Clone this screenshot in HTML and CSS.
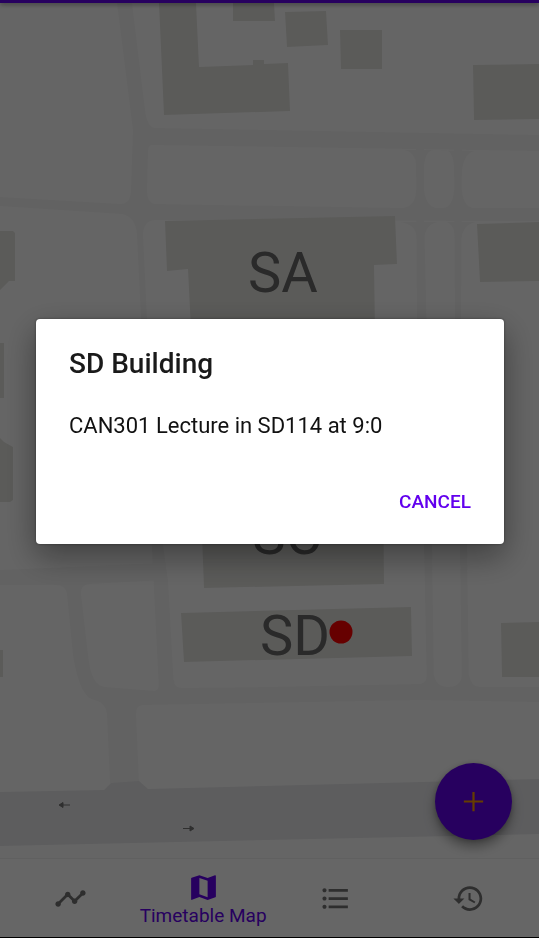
FILE: index.html
```html
<!DOCTYPE html>
<html lang="en">
<head>
<meta charset="utf-8">
<meta name="viewport" content="width=device-width, initial-scale=1">
<title>Timetable Map</title>
<link rel="stylesheet" href="styles.css">
</head>
<body>
<div class="app">
  <header class="app-bar"></header>
  <main class="map">
    <svg class="map-canvas" viewBox="0 3 539 855" preserveAspectRatio="xMidYMid slice" role="img" aria-label="Campus map">
      <g class="road">
        <path d="M117 3H132L145 110Q147 126 154 128L539 135V151L152 145Q148 145 148 152L147 190Q147 203 155 204L400 208L539 208V221L155 220Q143 221 143 235L147 318L163 545L168 580L174 690H159L154 590L141 318L137 235Q136 217 122 214L0 206V197L120 204Q131 204 131 190L133 130Z"/>
        <path d="M416 145H424L424 215L432 545L434 692H427L424 545L417 318Z"/>
        <path d="M454 145H462L461 318L467 545L469 692H462L460 545L455 318Z"/>
        <path d="M405 150Q416 153 416 165V145H424V165Q426 150 434 150ZM434 150H446Q454 152 454 170V145H462V170Q465 151 476 151ZM403 208Q416 206 416 190L424 190Q426 206 436 208ZM444 208Q453 206 454 190H462Q463 206 473 208ZM400 222Q417 224 417 240H424Q425 224 438 222ZM446 222Q455 224 455 240H461Q463 224 476 222Z"/>
        <path d="M0 570L160 563L166 580L90 584Q80 585 81 594L88 655Q91 686 105 687L155 691Q160 690 159 680L174 680Q174 688 182 688L269 687L420 684Q427 683 427 675H434Q436 687 448 687Q461 687 462 675H469Q471 687 480 687H539V702L420 700L142 705Q136 706 136 714L139 783H110L107 714Q106 703 95 700Q80 699 73 655L67 594Q66 585 55 585H0Z"/>
      </g>
      <path class="main-road" d="M0 792L104 790L111 783L139 781L148 789L539 779V834L0 846Z"/>
      <g class="building">
        <path d="M159 3H196L199 67L253 65V60H264V64L288 63L290 111L164 115Z"/>
        <path d="M233 3H274L275 21H233Z"/>
        <path d="M285 12L326 11L328 45L287 47Z"/>
        <path d="M340 30H382V69H341Z"/>
        <path d="M473 65L539 64V119L474 120Z"/>
        <path d="M165 221L395 216L397 264L374 265L375 330H191L188 269L167 271Z"/>
        <path d="M477 224L539 222V281L480 282Z"/>
        <path d="M200 480H383L384 584L204 588Z"/>
        <path d="M181 613L411 607L412 656L184 662Z"/>
        <path d="M501 623L539 622V677H502Z"/>
        <path d="M0 231H13L15 233V281H9L0 290ZM0 343H4V398H0ZM0 438L4 442L13 447V500L10 502H0ZM0 650H3V677H0Z"/>
      </g>
      <g class="arrows">
        <path d="M70 805H60M63 802.500L59 805L63 807.500Z"/>
        <path d="M183 828.500H193M190 826L194 828.500L190 831Z"/>
      </g>
      <g class="labels">
        <text x="283" y="292">SA</text>
        <text x="287" y="554">SC</text>
        <text x="295" y="655">SD</text>
      </g>
      <circle class="marker" cx="341" cy="632" r="11.500"/>
    </svg>
    <button class="fab" type="button" aria-label="Add">
      <svg viewBox="0 0 24 24" aria-hidden="true"><path d="M19 12.800h-6.200V19h-1.600v-6.200H5v-1.600h6.200V5h1.600v6.200H19z"/></svg>
    </button>
  </main>
  <nav class="tabs">
    <a class="tab" href="#stats" aria-label="Statistics">
      <svg viewBox="0 0 24 24" aria-hidden="true"><path d="M23 8c0 1.100-.9 2-2 2-.18 0-.35-.02-.51-.07l-3.560 3.550c.05.160.070.340.070.520 0 1.100-.9 2-2 2s-2-.9-2-2c0-.18.020-.36.070-.52l-2.550-2.550c-.16.050-.34.070-.52.070s-.36-.02-.52-.07l-4.550 4.560c.05.160.070.330.070.510 0 1.100-.9 2-2 2s-2-.9-2-2 .9-2 2-2c.18 0 .35.020.51.070l4.560-4.550C8.020 9.360 8 9.180 8 9c0-1.100.9-2 2-2s2 .9 2 2c0 .18-.02.36-.07.52l2.550 2.550c.16-.05.340-.07.520-.07s.36.020.52.070l3.550-3.560C19.020 8.350 19 8.180 19 8c0-1.100.9-2 2-2s2 .9 2 2z"/></svg>
    </a>
    <a class="tab tab-active" href="#map" aria-current="page">
      <svg viewBox="0 0 24 24" aria-hidden="true"><path d="M20.500 3l-.16.030L15 5.100 9 3 3.360 4.900c-.21.070-.36.250-.36.480V20.500c0 .28.220.5.500.5l.16-.03L9 18.900l6 2.100 5.640-1.900c.21-.07.360-.25.360-.48V3.500c0-.28-.22-.5-.5-.5zM15 19l-6-2.110V5l6 2.110V19z"/></svg>
      <span>Timetable Map</span>
    </a>
    <a class="tab" href="#list" aria-label="List">
      <svg viewBox="0 0 24 24" aria-hidden="true"><path d="M4 10.500c-.83 0-1.500.67-1.500 1.500s.67 1.500 1.500 1.500 1.500-.67 1.500-1.500-.67-1.500-1.500-1.500zm0-6c-.83 0-1.500.67-1.500 1.500S3.170 7.500 4 7.500 5.500 6.830 5.500 6 4.830 4.500 4 4.500zm0 12c-.83 0-1.500.68-1.500 1.500s.68 1.500 1.500 1.500 1.500-.68 1.500-1.500-.67-1.500-1.500-1.500zM7 19h14v-2H7v2zm0-6h14v-2H7v2zm0-8v2h14V5H7z"/></svg>
    </a>
    <a class="tab" href="#history" aria-label="History">
      <svg viewBox="0 0 24 24" aria-hidden="true"><path d="M13 3c-4.970 0-9 4.030-9 9H1l3.890 3.890.07.14L9 12H6c0-3.870 3.130-7 7-7s7 3.130 7 7-3.130 7-7 7c-1.930 0-3.680-.79-4.940-2.060l-1.420 1.420C8.270 19.990 10.510 21 13 21c4.970 0 9-4.030 9-9s-4.030-9-9-9zm-1 5v5l4.280 2.540.72-1.210-3.500-2.080V8H12z"/></svg>
    </a>
  </nav>
</div>
<div class="scrim">
  <section class="dialog" role="dialog" aria-modal="true" aria-labelledby="dialog-title">
    <h1 id="dialog-title">SD Building</h1>
    <p>CAN301 Lecture in SD114 at 9:0</p>
    <button class="dialog-action" type="button">CANCEL</button>
  </section>
</div>
</body>
</html>
```
FILE: styles.css
```css
* {
  box-sizing: border-box;
}

body {
  margin: 0;
  font-family: Roboto, "Noto Sans", sans-serif;
  background: #fff;
}

.app {
  display: flex;
  flex-direction: column;
  height: 100vh;
  border-bottom: 1px solid #000;
}

.app-bar {
  position: relative;
  flex: none;
  height: 3px;
  background: #6200ee;
  box-shadow: 0 1px 5px rgba(0, 0, 0, 0.5);
  z-index: 1;
}

.map {
  position: relative;
  flex: 1;
  min-height: 0;
  background: #fdfdfd;
}

.map-canvas {
  display: block;
  width: 100%;
  height: 100%;
}

.road {
  fill: #f5f5f5;
}

.main-road {
  fill: #e8e8eb;
}

.building {
  fill: #e3e3df;
}

.arrows {
  fill: #777;
  stroke: #777;
}

.labels {
  fill: #696969;
  font-size: 56px;
  text-anchor: middle;
}

.marker {
  fill: #f00;
}

.fab {
  position: absolute;
  right: 27px;
  bottom: 18px;
  display: grid;
  place-items: center;
  width: 77px;
  height: 77px;
  padding: 0;
  border: 0;
  border-radius: 50%;
  background: #6200ee;
  box-shadow: 0 7px 12px rgba(0, 0, 0, 0.35), 0 1px 5px rgba(0, 0, 0, 0.2);
}

.fab svg {
  width: 33px;
  height: 33px;
  fill: #ff9800;
}

.tabs {
  display: flex;
  flex: none;
  height: 79px;
  padding: 0 4px;
  background: #fff;
  border-top: 1px solid #f0f0f0;
}

.tab {
  display: flex;
  flex: 1;
  flex-direction: column;
  align-items: center;
  justify-content: center;
  color: #737373;
  font-size: 19px;
  line-height: 24px;
  text-decoration: none;
  white-space: nowrap;
}

.tab svg {
  width: 33px;
  height: 33px;
  fill: currentColor;
}

.tab-active {
  padding-top: 2px;
  color: #6200ee;
}

.scrim {
  position: fixed;
  inset: 0;
  z-index: 2;
  display: flex;
  align-items: center;
  padding: 0 35px 76px 36px;
  background: rgba(0, 0, 0, 0.6);
}

.dialog {
  display: flex;
  flex: 1;
  flex-direction: column;
  padding: 27px 33px 18px;
  border-radius: 4px;
  background: #fff;
  box-shadow: 0 12px 32px rgba(0, 0, 0, 0.4), 0 0 3px rgba(0, 0, 0, 0.4);
}

.dialog h1 {
  margin: 0;
  color: #1a1a1a;
  font-size: 28px;
  font-weight: 500;
  line-height: 36px;
}

.dialog p {
  margin: 30px 0 38px;
  color: #111;
  font-size: 22px;
  line-height: 28px;
}

.dialog-action {
  align-self: flex-end;
  padding: 0;
  border: 0;
  background: none;
  color: #6200ee;
  font: 500 19px/48px Roboto, "Noto Sans", sans-serif;
}
```
